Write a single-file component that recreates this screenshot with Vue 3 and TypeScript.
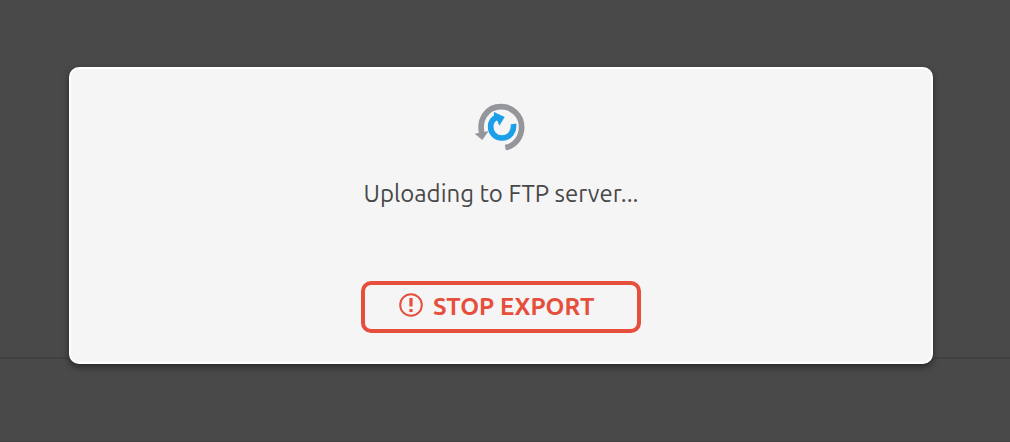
<script setup lang="ts">
import { ref } from 'vue'

const status = ref('Uploading to FTP server...')
const stopping = ref(false)

function stopExport(): void {
  stopping.value = true
}
</script>

<template>
  <main class="page">
    <div class="backdrop" aria-hidden="true">
      <div class="panel"></div>
      <div class="panel panel-rest"></div>
    </div>
    <section class="dialog" role="dialog" aria-label="Export progress">
      <svg class="spinner" viewBox="0 0 162 150" aria-hidden="true">
        <path class="outer" d="M27 102 C16 58 42 20 84 20 C118 20 146 46 146 81 C146 112 126 138 97 143" />
        <path class="outer-head" d="M5 101 L47 93 L28 120 Z" />
        <path class="inner" d="M121 72 C125 94 110 114 87 114 C66 114 53 98 53 80 C53 67 60 56 72 52" />
        <path class="inner-head" d="M63 36 L95 51 L79 77 L73 62 L62 52 Z" />
      </svg>
      <p class="status" aria-live="polite">{{ status }}</p>
      <button class="stop" type="button" :disabled="stopping" @click="stopExport">
        <svg class="alert" viewBox="0 0 24 24" aria-hidden="true">
          <circle cx="12" cy="12" r="10.8" />
          <path d="M10.4 5h3.2v8.6h-3.2zM10.4 16h3.2v3h-3.2z" />
        </svg>
        <span>STOP EXPORT</span>
      </button>
    </section>
  </main>
</template>

<style>
body {
  margin: 0;
  background: #494949;
}
</style>

<style scoped>
.page {
  position: relative;
  box-sizing: border-box;
  min-height: 100vh;
  padding: 67px 77px 78px 69px;
  font-family: Ubuntu, "Noto Sans", sans-serif;
}
.backdrop {
  position: absolute;
  inset: 0;
  display: flex;
  flex-direction: column;
  background: #494949;
}
.panel {
  box-sizing: border-box;
  height: 359px;
  border-bottom: 2px solid #414141;
}
.panel-rest {
  flex: 1;
  height: auto;
  border-bottom: 1px solid #424242;
}
.dialog {
  position: relative;
  box-sizing: border-box;
  display: flex;
  flex-direction: column;
  align-items: center;
  padding: 31px 0 29px;
  border: 2px solid #ffffff;
  border-radius: 10px;
  background: #f5f5f5;
  box-shadow: 0 3px 7px rgba(0, 0, 0, 0.45);
}
.spinner {
  width: 54px;
  height: 50px;
  margin-right: 2px;
  filter: blur(0.7px);
}
.outer,
.inner {
  fill: none;
  stroke-width: 17;
}
.outer {
  stroke: #94969c;
}
.outer-head {
  fill: #94969c;
}
.inner {
  stroke: #1b9fe8;
}
.inner-head {
  fill: #1b9fe8;
}
.status {
  margin: 28px 0 0;
  color: #484848;
  font-size: 24px;
  line-height: 32px;
}
.stop {
  display: flex;
  align-items: center;
  gap: 10px;
  box-sizing: border-box;
  width: 280px;
  height: 52px;
  margin-top: 71px;
  padding: 0 34px;
  border: 4px solid #e74f3d;
  border-radius: 10px;
  background: transparent;
  color: #e74f3d;
  font-family: inherit;
  font-size: 24px;
  font-weight: 700;
  line-height: 32px;
  white-space: nowrap;
  cursor: pointer;
}
.alert {
  flex: none;
  width: 24px;
  height: 24px;
  margin-bottom: 4px;
  fill: currentColor;
}
.alert circle {
  fill: none;
  stroke: currentColor;
  stroke-width: 2;
}
</style>
